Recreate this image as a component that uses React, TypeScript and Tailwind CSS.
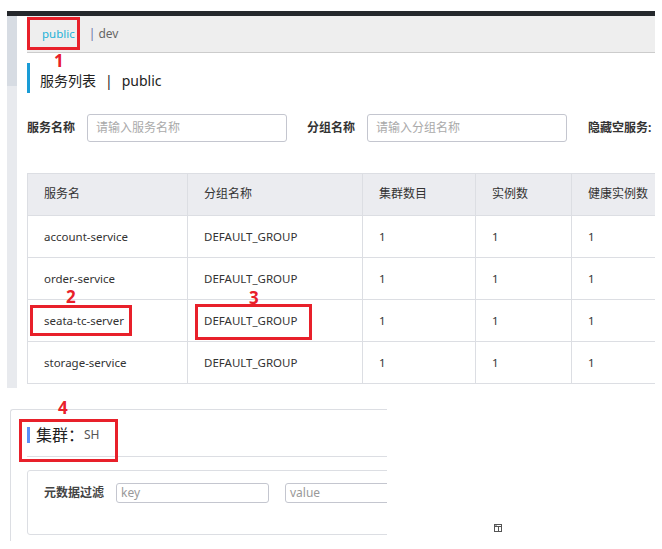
import React from "react";

const font = { fontFamily: '"Noto Sans", "Noto Sans CJK SC", sans-serif' };

const rows = [
  { name: "account-service", group: "DEFAULT_GROUP" },
  { name: "order-service", group: "DEFAULT_GROUP" },
  { name: "seata-tc-server", group: "DEFAULT_GROUP" },
  { name: "storage-service", group: "DEFAULT_GROUP" },
];

const cols = "grid grid-cols-[160px_175px_113px_96px_104px]";

function Mark({ n, className }: { n: string; className: string }) {
  return (
    <span className={`absolute text-[17px] font-bold leading-none text-[#e8202a] ${className}`}>{n}</span>
  );
}

export default function App() {
  return (
    <div className="relative h-[549px] w-[662px] overflow-hidden bg-white text-[#333]" style={font}>
      <div className="ml-[7px] mt-[11px] w-[648px] overflow-hidden">
        <div className="h-[5px] bg-[#25282c]" />
        <div className="flex">
          <div className="flex w-[10px] shrink-0 flex-col">
            <div className="h-[70px] bg-[#d7dce3]" />
            <div className="h-[302px] bg-[#e8eaee]" />
          </div>
          <div className="ml-[10px] w-[628px] shrink-0">
            {/* tabs */}
            <div className="flex h-[37px] items-center border-b border-[#cccccc] bg-[#eeeeee] text-[12px]">
              <span className="ml-[15px] text-[11.5px] text-[#22b2d8]">public</span>
              <span className="ml-[14px] text-[#666]">
                <span className="text-[#6a70a8]">|</span> dev
              </span>
            </div>
            {/* title */}
            <div className="mt-[10px] flex h-[30px] items-end border-l-[3px] border-[#1a9cd6] pb-[2px] pl-[10px] text-[14px] text-[#222]">
              服务列表<span className="mx-[9px]">|</span>public
            </div>
            {/* search */}
            <div className="mt-[21px] flex h-[28px] items-center text-[12px]">
              <span className="w-[60px] font-bold text-[#333]">服务名称</span>
              <div className="flex h-[28px] w-[200px] items-center rounded-[3px] border border-[#c4c6cf] pl-[8px] text-[#aaa]">
                请输入服务名称
              </div>
              <span className="ml-[20px] w-[60px] font-bold text-[#333]">分组名称</span>
              <div className="flex h-[28px] w-[200px] items-center rounded-[3px] border border-[#c4c6cf] pl-[8px] text-[#aaa]">
                请输入分组名称
              </div>
              <span className="ml-[21px] whitespace-nowrap font-bold text-[#333]">隐藏空服务:</span>
            </div>
            {/* table */}
            <div className="mt-[31px] w-[648px] border-l border-t border-[#dcdee3] text-[11.5px]">
              <div className={`${cols} h-[42px] bg-[#ebecf0] text-[12px]`}>
                {["服务名", "分组名称", "集群数目", "实例数", "健康实例数"].map((h) => (
                  <div key={h} className="flex items-center border-b border-r border-[#dcdee3] pb-[1px] pl-[16px] text-[#333]">
                    {h}
                  </div>
                ))}
              </div>
              {rows.map((r) => (
                <div key={r.name} className={`${cols} h-[42px]`}>
                  {[r.name, r.group, "1", "1", "1"].map((c, i) => (
                    <div key={i} className="flex items-center border-b border-r border-[#dcdee3] pl-[16px] text-[#333]">
                      {c}
                    </div>
                  ))}
                </div>
              ))}
            </div>
          </div>
        </div>
      </div>

      {/* cluster section */}
      <div className="ml-[10px] mt-[21px] h-[132px] w-[377px] overflow-hidden rounded-tl-[3px] border-l border-t border-[#dcdee3]">
        <div className="ml-[16px] w-[420px]">
          <div className="flex h-[47px] items-center border-b border-[#dcdee3]">
            <div className="mt-[3px] flex h-[16px] items-center border-l-[3px] border-[#5b8ff9] pl-[6px]">
              <span className="text-[16px] text-[#222]">集群：</span>
              <span className="text-[12px] text-[#555]">SH</span>
            </div>
          </div>
          <div className="mt-[13px] flex h-[65px] items-start rounded-[3px] border border-[#dcdee3] pl-[16px] pt-[12px] text-[12px]">
            <span className="mt-[1px] w-[72px] font-bold text-[#444]">元数据过滤</span>
            <div className="flex h-[20px] w-[153px] items-center rounded-[3px] border border-[#c4c6cf] pl-[4px] text-[#999]">
              key
            </div>
            <div className="ml-[16px] flex h-[20px] w-[153px] items-center rounded-[3px] border border-[#c4c6cf] pl-[4px] text-[#999]">
              value
            </div>
          </div>
        </div>
      </div>

      {/* stray window icon */}
      <svg className="absolute left-[494px] top-[524px]" width="8" height="8" viewBox="0 0 8 8">
        <rect x="0.5" y="0.5" width="7" height="7" fill="none" stroke="#555" strokeWidth="1" />
        <line x1="0" y1="2.5" x2="8" y2="2.5" stroke="#555" strokeWidth="1" />
        <line x1="4.5" y1="2.5" x2="4.5" y2="8" stroke="#555" strokeWidth="1" />
        <line x1="1.5" y1="1.5" x2="2.5" y2="1.5" stroke="#555" strokeWidth="1" />
      </svg>

      {/* annotations */}
      <div className="absolute left-[27px] top-[17px] h-[33px] w-[53px] border-[3px] border-[#e8202a]" />
      <Mark n="1" className="left-[54px] top-[52px]" />
      <div className="absolute left-[30px] top-[305px] h-[31px] w-[102px] border-[3px] border-[#e8202a]" />
      <Mark n="2" className="left-[66px] top-[288px]" />
      <div className="absolute left-[195px] top-[304px] h-[36px] w-[117px] border-[3px] border-[#e8202a]" />
      <Mark n="3" className="left-[249px] top-[289px]" />
      <div className="absolute left-[19px] top-[419px] h-[43px] w-[99px] border-[3px] border-[#e8202a]" />
      <Mark n="4" className="left-[58px] top-[399px]" />
    </div>
  );
}
